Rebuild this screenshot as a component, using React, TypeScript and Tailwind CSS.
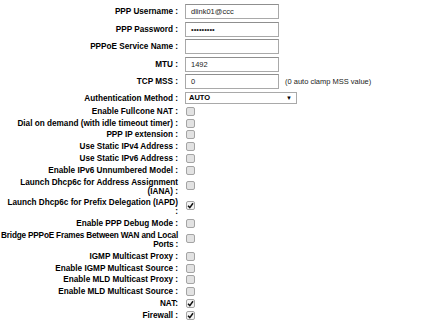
import React from "react";

type Row =
  | { kind: "input"; label: string; value: string; note?: string }
  | { kind: "select"; label: string; value: string }
  | { kind: "check"; lines: string[]; checked?: boolean; tight?: boolean };

const rows: Row[] = [
  { kind: "input", label: "PPP Username :", value: "dlink01@ccc" },
  { kind: "input", label: "PPP Password :", value: "•••••••••" },
  { kind: "input", label: "PPPoE Service Name :", value: "" },
  { kind: "input", label: "MTU :", value: "1492" },
  { kind: "input", label: "TCP MSS :", value: "0", note: "(0 auto clamp MSS value)" },
  { kind: "select", label: "Authentication Method :", value: "AUTO" },
  { kind: "check", lines: ["Enable Fullcone NAT :"] },
  { kind: "check", lines: ["Dial on demand (with idle timeout timer) :"] },
  { kind: "check", lines: ["PPP IP extension :"] },
  { kind: "check", lines: ["Use Static IPv4 Address :"] },
  { kind: "check", lines: ["Use Static IPv6 Address :"] },
  { kind: "check", lines: ["Enable IPv6 Unnumbered Model :"] },
  { kind: "check", lines: ["Launch Dhcp6c for Address Assignment", "(IANA) :"] },
  { kind: "check", lines: ["Launch Dhcp6c for Prefix Delegation (IAPD)", ":"], checked: true },
  { kind: "check", lines: ["Enable PPP Debug Mode :"] },
  { kind: "check", lines: ["Bridge PPPoE Frames Between WAN and Local", "Ports :"], tight: true },
  { kind: "check", lines: ["IGMP Multicast Proxy :"] },
  { kind: "check", lines: ["Enable IGMP Multicast Source :"] },
  { kind: "check", lines: ["Enable MLD Multicast Proxy :"] },
  { kind: "check", lines: ["Enable MLD Multicast Source :"] },
  { kind: "check", lines: ["NAT:"], checked: true },
  { kind: "check", lines: ["Firewall :"], checked: true },
];

function Checkbox({ checked }: { checked?: boolean }) {
  return (
    <span
      className={`flex h-[9px] w-[9px] items-center justify-center rounded-[2px] border border-[#a4a4a4] ${
        checked ? "bg-[#f3f3f3]" : "bg-[#e2e2e2]"
      }`}
    >
      {checked && (
        <svg width="7" height="7" viewBox="0 0 7 7">
          <path d="M1 3.8 L2.8 5.6 L6 1.2" fill="none" stroke="#111" strokeWidth="1.5" />
        </svg>
      )}
    </span>
  );
}

function Label({ lines, tight }: { lines: string[]; tight?: boolean }) {
  return (
    <div
      className={`flex w-[178px] shrink-0 flex-col items-end font-bold text-[8.2px] leading-[9px] text-black whitespace-nowrap ${
        tight ? "tracking-[-0.18px]" : ""
      }`}
    >
      {lines.map((l, i) => (
        <div key={i}>{l}</div>
      ))}
    </div>
  );
}

export default function App() {
  return (
    <div
      className="h-[321px] w-[425px] overflow-hidden bg-white pt-[3px]"
      style={{ fontFamily: '"Liberation Sans", Arial, sans-serif' }}
    >
      {rows.map((r, i) => {
        if (r.kind === "input") {
          return (
            <div key={i} className="flex h-[17.5px] items-center">
              <Label lines={[r.label]} />
              <div className="ml-[7px] flex h-[15px] w-[94px] items-center border border-[#a9a9a9] border-t-[#8f8f8f] bg-white px-[5px] text-[7.5px] text-[#222]">
                {r.value}
              </div>
              {r.note && <span className="ml-[6px] text-[7.5px] text-[#222]">{r.note}</span>}
            </div>
          );
        }
        if (r.kind === "select") {
          return (
            <div key={i} className="flex h-[15px] items-center">
              <Label lines={[r.label]} />
              <div className="ml-[7px] flex h-[12px] w-[112px] items-center justify-between border border-[#a9a9a9] bg-white pl-[3px] pr-[4px] text-[7.5px] font-semibold text-black">
                <span>{r.value}</span>
                <span className="text-[6px]">▼</span>
              </div>
            </div>
          );
        }
        const dbl = r.lines.length > 1;
        return (
          <div key={i} className={`flex items-center ${dbl ? "h-[20.8px]" : "h-[11.8px]"}`}>
            <Label lines={r.lines} tight={r.tight} />
            <div className={`ml-[8px] ${dbl ? "mb-[3px]" : ""}`}>
              <Checkbox checked={r.checked} />
            </div>
          </div>
        );
      })}
    </div>
  );
}
